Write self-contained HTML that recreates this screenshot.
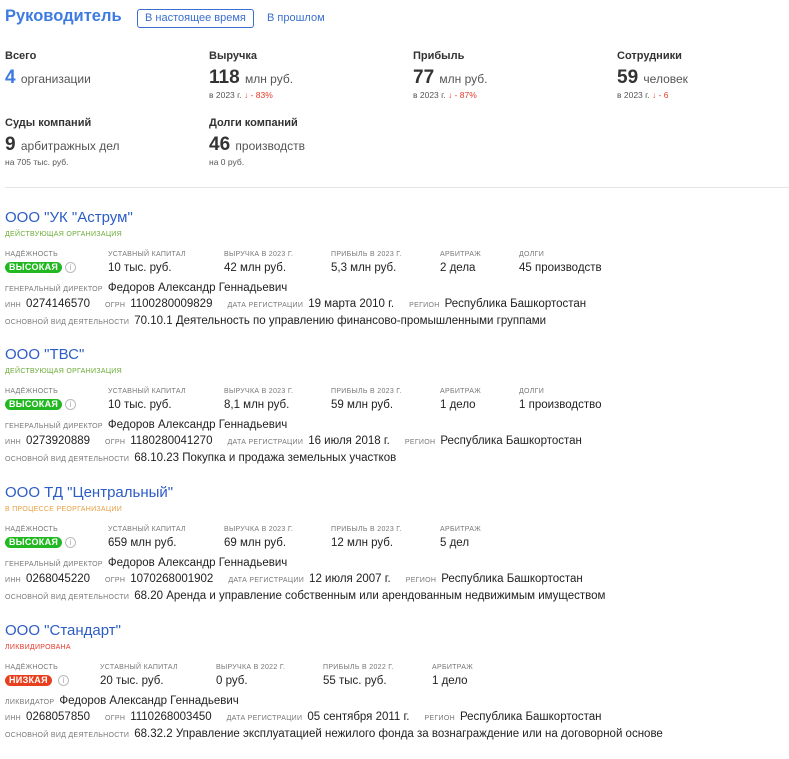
<!DOCTYPE html>
<html><head><meta charset="utf-8"><style>
*{margin:0;padding:0;box-sizing:border-box}
body{width:789px;height:741px;background:#fff;font-family:"Liberation Sans",sans-serif;color:#222;position:relative;overflow:hidden}
.a{position:absolute;white-space:nowrap}
h1{position:absolute;left:5px;top:7px;font-size:16.5px;font-weight:bold;color:#3d7be0}
.tab{position:absolute;font-size:11px;color:#3a6fd0;line-height:16px}
.st h4{font-size:11px;font-weight:bold;color:#333}
.st .big{font-size:19px;font-weight:bold;color:#333;margin-top:5px}
.st .big span{font-size:12px;font-weight:normal;color:#555}
.st .sm{font-size:8.5px;color:#555;margin-top:1px}
.red{color:#e53a2a}
.blk{position:absolute;left:0;width:789px;height:137px}
.t{position:absolute;left:5px;top:0;font-size:15px;color:#2c5cc5;line-height:18px}
.s{position:absolute;left:5px;top:21px;font-size:7px;letter-spacing:.3px;line-height:10px}
.l{position:absolute;font-size:7px;color:#777;letter-spacing:.3px;top:41px;line-height:10px}
.v{position:absolute;font-size:11.5px;color:#222;top:52px;line-height:14px}
.b{position:absolute;left:5px;top:53px;font-size:9px;font-weight:bold;color:#fff;border-radius:6px;padding:0 4px;line-height:11px;letter-spacing:.3px}
.i{position:absolute;left:65px;top:53px;width:11px;height:11px;border:1px solid #bbb;border-radius:50%;font-size:8px;color:#aaa;text-align:center;line-height:9px}
.r{position:absolute;left:5px;font-size:11.5px;line-height:14px;white-space:nowrap}
.r small{font-size:7px;color:#777;letter-spacing:.3px;margin-right:5px}
.r em{font-style:normal;margin-right:15px}
</style></head><body>
<h1>Руководитель</h1>
<div class="tab" style="left:137px;top:9px;border:1px solid #3a6fd0;border-radius:3px;padding:0 7px;height:19px;line-height:17px">В настоящее время</div>
<div class="tab" style="left:267px;top:10px">В прошлом</div>

<div class="a st" style="left:5px;top:50px"><h4>Всего</h4><div class="big"><span style="color:#3d7be0;font-size:19px;font-weight:bold">4</span> <span>организации</span></div></div>
<div class="a st" style="left:209px;top:50px"><h4>Выручка</h4><div class="big">118 <span>млн руб.</span></div><div class="sm">в 2023 г. <span class="red">↓ - 83%</span></div></div>
<div class="a st" style="left:413px;top:50px"><h4>Прибыль</h4><div class="big">77 <span>млн руб.</span></div><div class="sm">в 2023 г. <span class="red">↓ - 87%</span></div></div>
<div class="a st" style="left:617px;top:50px"><h4>Сотрудники</h4><div class="big">59 <span>человек</span></div><div class="sm">в 2023 г. <span class="red">↓ - 6</span></div></div>
<div class="a st" style="left:5px;top:117px"><h4>Суды компаний</h4><div class="big">9 <span>арбитражных дел</span></div><div class="sm">на 705 тыс. руб.</div></div>
<div class="a st" style="left:209px;top:117px"><h4>Долги компаний</h4><div class="big">46 <span>производств</span></div><div class="sm">на 0 руб.</div></div>
<div class="a" style="left:5px;top:187px;width:784px;height:1px;background:#e4e4e4"></div>

<div class="blk" style="top:209px">
<div class="t">ООО "УК "Аструм"</div><div class="s" style="color:#6aab35">ДЕЙСТВУЮЩАЯ ОРГАНИЗАЦИЯ</div>
<div class="l" style="left:5px">НАДЁЖНОСТЬ</div><div class="b" style="background:#22b822">ВЫСОКАЯ</div><div class="i">i</div>
<div class="l" style="left:108px">УСТАВНЫЙ КАПИТАЛ</div><div class="v" style="left:108px">10 тыс. руб.</div>
<div class="l" style="left:224px">ВЫРУЧКА В 2023 Г.</div><div class="v" style="left:224px">42 млн руб.</div>
<div class="l" style="left:331px">ПРИБЫЛЬ В 2023 Г.</div><div class="v" style="left:331px">5,3 млн руб.</div>
<div class="l" style="left:440px">АРБИТРАЖ</div><div class="v" style="left:440px">2 дела</div>
<div class="l" style="left:519px">ДОЛГИ</div><div class="v" style="left:519px">45 производств</div>
<div class="r" style="top:72px"><small>ГЕНЕРАЛЬНЫЙ ДИРЕКТОР</small>Федоров Александр Геннадьевич</div>
<div class="r" style="top:88px"><small>ИНН</small><em>0274146570</em><small>ОГРН</small><em>1100280009829</em><small>ДАТА РЕГИСТРАЦИИ</small><em>19 марта 2010 г.</em><small>РЕГИОН</small>Республика Башкортостан</div>
<div class="r" style="top:105px"><small>ОСНОВНОЙ ВИД ДЕЯТЕЛЬНОСТИ</small>70.10.1 Деятельность по управлению финансово-промышленными группами</div>
</div>

<div class="blk" style="top:346px">
<div class="t">ООО "ТВС"</div><div class="s" style="color:#6aab35">ДЕЙСТВУЮЩАЯ ОРГАНИЗАЦИЯ</div>
<div class="l" style="left:5px">НАДЁЖНОСТЬ</div><div class="b" style="background:#22b822">ВЫСОКАЯ</div><div class="i">i</div>
<div class="l" style="left:108px">УСТАВНЫЙ КАПИТАЛ</div><div class="v" style="left:108px">10 тыс. руб.</div>
<div class="l" style="left:224px">ВЫРУЧКА В 2023 Г.</div><div class="v" style="left:224px">8,1 млн руб.</div>
<div class="l" style="left:331px">ПРИБЫЛЬ В 2023 Г.</div><div class="v" style="left:331px">59 млн руб.</div>
<div class="l" style="left:440px">АРБИТРАЖ</div><div class="v" style="left:440px">1 дело</div>
<div class="l" style="left:519px">ДОЛГИ</div><div class="v" style="left:519px">1 производство</div>
<div class="r" style="top:72px"><small>ГЕНЕРАЛЬНЫЙ ДИРЕКТОР</small>Федоров Александр Геннадьевич</div>
<div class="r" style="top:88px"><small>ИНН</small><em>0273920889</em><small>ОГРН</small><em>1180280041270</em><small>ДАТА РЕГИСТРАЦИИ</small><em>16 июля 2018 г.</em><small>РЕГИОН</small>Республика Башкортостан</div>
<div class="r" style="top:105px"><small>ОСНОВНОЙ ВИД ДЕЯТЕЛЬНОСТИ</small>68.10.23 Покупка и продажа земельных участков</div>
</div>

<div class="blk" style="top:484px">
<div class="t">ООО ТД "Центральный"</div><div class="s" style="color:#e6a040">В ПРОЦЕССЕ РЕОРГАНИЗАЦИИ</div>
<div class="l" style="left:5px">НАДЁЖНОСТЬ</div><div class="b" style="background:#22b822">ВЫСОКАЯ</div><div class="i">i</div>
<div class="l" style="left:108px">УСТАВНЫЙ КАПИТАЛ</div><div class="v" style="left:108px">659 млн руб.</div>
<div class="l" style="left:224px">ВЫРУЧКА В 2023 Г.</div><div class="v" style="left:224px">69 млн руб.</div>
<div class="l" style="left:331px">ПРИБЫЛЬ В 2023 Г.</div><div class="v" style="left:331px">12 млн руб.</div>
<div class="l" style="left:440px">АРБИТРАЖ</div><div class="v" style="left:440px">5 дел</div>
<div class="r" style="top:72px"><small>ГЕНЕРАЛЬНЫЙ ДИРЕКТОР</small>Федоров Александр Геннадьевич</div>
<div class="r" style="top:88px"><small>ИНН</small><em>0268045220</em><small>ОГРН</small><em>1070268001902</em><small>ДАТА РЕГИСТРАЦИИ</small><em>12 июля 2007 г.</em><small>РЕГИОН</small>Республика Башкортостан</div>
<div class="r" style="top:105px"><small>ОСНОВНОЙ ВИД ДЕЯТЕЛЬНОСТИ</small>68.20 Аренда и управление собственным или арендованным недвижимым имуществом</div>
</div>

<div class="blk" style="top:622px">
<div class="t">ООО "Стандарт"</div><div class="s" style="color:#e53a2a">ЛИКВИДИРОВАНА</div>
<div class="l" style="left:5px">НАДЁЖНОСТЬ</div><div class="b" style="background:#e8401e">НИЗКАЯ</div><div class="i" style="left:58px">i</div>
<div class="l" style="left:100px">УСТАВНЫЙ КАПИТАЛ</div><div class="v" style="left:100px">20 тыс. руб.</div>
<div class="l" style="left:216px">ВЫРУЧКА В 2022 Г.</div><div class="v" style="left:216px">0 руб.</div>
<div class="l" style="left:323px">ПРИБЫЛЬ В 2022 Г.</div><div class="v" style="left:323px">55 тыс. руб.</div>
<div class="l" style="left:432px">АРБИТРАЖ</div><div class="v" style="left:432px">1 дело</div>
<div class="r" style="top:72px"><small>ЛИКВИДАТОР</small>Федоров Александр Геннадьевич</div>
<div class="r" style="top:88px"><small>ИНН</small><em>0268057850</em><small>ОГРН</small><em>1110268003450</em><small>ДАТА РЕГИСТРАЦИИ</small><em>05 сентября 2011 г.</em><small>РЕГИОН</small>Республика Башкортостан</div>
<div class="r" style="top:105px"><small>ОСНОВНОЙ ВИД ДЕЯТЕЛЬНОСТИ</small>68.32.2 Управление эксплуатацией нежилого фонда за вознаграждение или на договорной основе</div>
</div>
</body></html>
